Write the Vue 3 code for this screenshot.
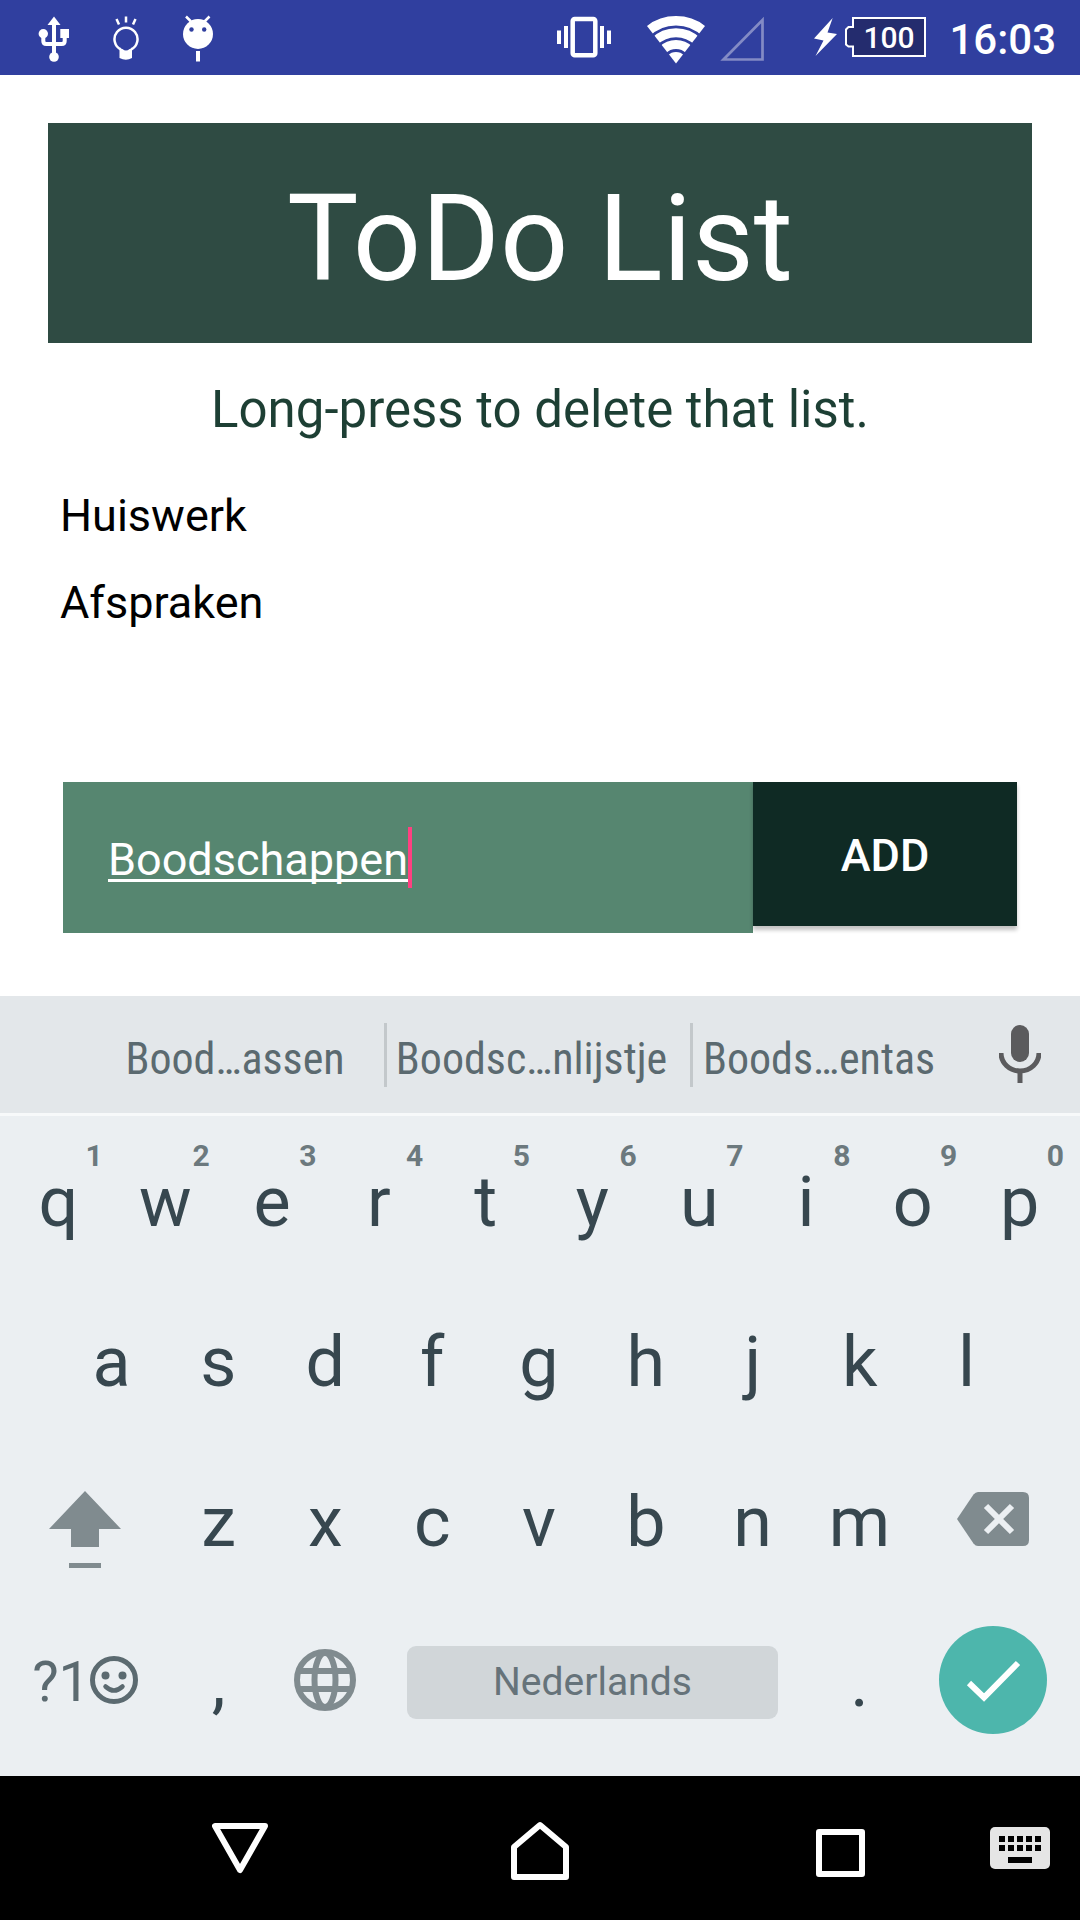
<script setup>
import { ref } from 'vue'

const lists = ref(['Huiswerk', 'Afspraken'])
const draft = ref('Boodschappen')

const suggestions = ['Bood…assen', 'Boodsc…nlijstje', 'Boods…entas']
const topRow = [...'qwertyuiop'].map((letter, i) => ({ letter, hint: (i + 1) % 10 }))
const homeRow = [...'asdfghjkl']
const bottomRow = [...'zxcvbnm']

function addList() {
  const name = draft.value.trim()
  if (!name) return
  lists.value.push(name)
  draft.value = ''
}

function removeList(index) {
  lists.value.splice(index, 1)
}

function type(char) {
  draft.value += char
}

function erase() {
  draft.value = draft.value.slice(0, -1)
}
</script>

<template>
  <div class="screen">
    <header class="status">
      <div class="notifications">
        <svg width="31" height="75" viewBox="38 0 31 75" fill="#fff" aria-label="USB">
          <path d="M54 16.500l6.500 8.500h-13z" />
          <circle cx="43.300" cy="33.700" r="4.700" />
          <path d="M60.300 29H69v9h-8.700z" />
          <circle cx="54" cy="57" r="4.800" />
          <path d="M54 24v30M43.300 36v5q0 3 3 3h15.400q3 0 3-3v-5" fill="none" stroke="#fff" stroke-width="4" />
        </svg>
        <svg width="26" height="75" viewBox="113 0 26 75" fill="none" stroke="#fff" aria-label="Tip">
          <path d="M121 49.500a11.500 11.500 0 1 1 10 0" stroke-width="2.500" />
          <path d="M119.500 49h3q3.500 3 7 0h2.500v9q-6 3.500-12.500 0z" fill="#fff" stroke="none" />
          <path d="M116.500 19l2.500 5.500M126 16.500v6M135.500 19l-2.500 5.500" stroke-width="2.500" />
        </svg>
        <svg width="30" height="75" viewBox="183 0 30 75" aria-label="Debugging">
          <path d="M186 16.500l5 5M209.500 16.500l-5 5" stroke="#fff" stroke-width="2.500" />
          <circle cx="198" cy="34" r="15" fill="#fff" />
          <path d="M196 51h4v10.500h-4z" fill="#fff" />
          <circle cx="191.500" cy="29.500" r="2.200" fill="#303f9f" />
          <circle cx="204.200" cy="29.500" r="2.200" fill="#303f9f" />
        </svg>
      </div>
      <div class="system">
        <svg class="vibrate" width="54" height="75" viewBox="557 0 54 75" fill="#fff" aria-label="Vibrate">
          <rect x="572.700" y="19" width="22.600" height="36.300" rx="2" fill="none" stroke="#fff" stroke-width="4.500" />
          <path d="M557 30.500h4v13.500h-4zM564 26h4v22h-4zM600 26h4v22h-4zM607 30.500h4v13.500h-4z" />
        </svg>
        <svg class="wifi" width="58" height="75" viewBox="647 0 58 75" fill="none" stroke="#fff" aria-label="Wi-Fi">
          <clipPath id="fan"><path d="M676 63.500L639 15.500V0h74v15.500z" /></clipPath>
          <g clip-path="url(#fan)">
            <circle cx="676" cy="63.500" r="42.700" stroke-width="9.500" />
            <circle cx="676" cy="63.500" r="30.700" stroke-width="9" />
            <circle cx="676" cy="63.500" r="19" stroke-width="9" />
            <circle cx="676" cy="63.500" r="11.500" fill="#fff" stroke="none" />
          </g>
        </svg>
        <svg class="signal" width="44" height="75" viewBox="720 0 44 75" fill="none" aria-label="No signal">
          <path d="M723.500 59.500h39v-39.500z" stroke="#838bc5" stroke-width="2.700" />
        </svg>
        <svg class="bolt" width="23" height="75" viewBox="814 0 23 75" fill="#fff" aria-label="Charging">
          <path d="M832.700 18L814 38.500l9.500 2-8 15.500L837 34l-9.500-1.500z" />
        </svg>
        <svg class="battery" width="82" height="75" viewBox="845 0 82 75" aria-label="Battery">
          <path d="M853 18h72v38h-72v-9.500h-4.500l-2.500-2V29.500l2.500-2.500h4.500z" fill="#242c6e" stroke="#fff" stroke-width="2" />
          <text x="889" y="48" text-anchor="middle" class="level">100</text>
        </svg>
        <time class="clock">16:03</time>
      </div>
    </header>

    <main class="app">
      <h1>ToDo List</h1>
      <p class="tip">Long-press to delete that list.</p>
      <ul class="lists">
        <li v-for="(name, i) in lists" :key="name" @contextmenu.prevent="removeList(i)">{{ name }}</li>
      </ul>
      <form class="entry" @submit.prevent="addList">
        <label class="field">
          <input v-model="draft" type="text" aria-label="New list" spellcheck="false" autocomplete="off" />
          <span class="caret"></span>
        </label>
        <button type="submit" class="add">ADD</button>
      </form>
    </main>

    <section class="keyboard" aria-label="Keyboard">
      <div class="suggestions">
        <button v-for="word in suggestions" :key="word" type="button">{{ word }}</button>
        <button type="button" class="mic" aria-label="Voice input">
          <svg width="42" height="58" viewBox="0 0 42 58">
            <rect x="12" y="0" width="18" height="37" rx="9" fill="#5b5b5d" />
            <path d="M2 28a19 18 0 0 0 38 0M21 46v12" fill="none" stroke="#5b5b5d" stroke-width="5" />
          </svg>
        </button>
      </div>

      <div class="keys">
        <div class="row">
          <button v-for="key in topRow" :key="key.letter" type="button" class="key" @click="type(key.letter)">
            {{ key.letter }}<small>{{ key.hint }}</small>
          </button>
        </div>
        <div class="row home">
          <button v-for="letter in homeRow" :key="letter" type="button" class="key" @click="type(letter)">{{ letter }}</button>
        </div>
        <div class="row">
          <button type="button" class="key wide" aria-label="Shift">
            <svg width="72" height="92" viewBox="0 0 72 92" fill="#808b8f">
              <path d="M36 15l36 38H50v18H22V53H0zM20 87h32v5H20z" />
            </svg>
          </button>
          <button v-for="letter in bottomRow" :key="letter" type="button" class="key" @click="type(letter)">{{ letter }}</button>
          <button type="button" class="key wide" aria-label="Backspace" @click="erase">
            <svg width="72" height="60" viewBox="0 0 72 60">
              <path d="M0 27L16.500 2.500Q18.500 0 21 0H66q6 0 6 6V48q0 6-6 6H21q-2.500 0-4.500-2.500z" fill="#808b8f" />
              <path d="M29 14l26 26M55 14L29 40" stroke="#ebeff2" stroke-width="6" />
            </svg>
          </button>
        </div>
        <div class="row">
          <button type="button" class="key wide symbols" aria-label="Symbols and emoji">
            <span>?1</span>
            <svg width="48" height="52" viewBox="0 0 48 52" fill="#5b6a70">
              <circle cx="24" cy="24" r="21.500" fill="none" stroke="#5b6a70" stroke-width="5" />
              <circle cx="15.500" cy="19.500" r="4" />
              <circle cx="32.500" cy="19.500" r="4" />
              <path d="M15.500 30.500q8.500 8 17 0" fill="none" stroke="#5b6a70" stroke-width="4.500" stroke-linecap="round" />
            </svg>
          </button>
          <button type="button" class="key" @click="type(',')">,</button>
          <button type="button" class="key" aria-label="Language">
            <svg width="62" height="66" viewBox="0 0 62 66" fill="none" stroke="#808b8f" stroke-width="6">
              <circle cx="31" cy="31" r="28" />
              <ellipse cx="31" cy="31" rx="10.500" ry="27" />
              <path d="M6 22h50M6 40h50" />
            </svg>
          </button>
          <div class="space-slot">
            <button type="button" class="space" @click="type(' ')">Nederlands</button>
          </div>
          <button type="button" class="key" @click="type('.')">.</button>
          <button type="button" class="key wide" aria-label="Done" @click="addList">
            <svg width="108" height="112" viewBox="0 0 108 112">
              <circle cx="54" cy="54" r="54" fill="#4db6ac" />
              <path d="M30 57l15 14.500L79 37" fill="none" stroke="#fff" stroke-width="6" />
            </svg>
          </button>
        </div>
      </div>
    </section>

    <nav class="navbar">
      <button type="button" class="back" aria-label="Back">
        <svg width="56" height="60" viewBox="0 0 56 60" fill="none" stroke="#fff" stroke-width="6" stroke-linejoin="round">
          <path d="M3 8h50L28 52z" />
        </svg>
      </button>
      <button type="button" aria-label="Home">
        <svg width="58" height="66" viewBox="0 0 58 66" fill="none" stroke="#fff" stroke-width="6">
          <path d="M3 62V32L29 10l26 22v30z" stroke-linejoin="round" />
        </svg>
      </button>
      <button type="button" aria-label="Recent apps">
        <svg width="49" height="58" viewBox="0 0 49 58" fill="none" stroke="#fff" stroke-width="6" stroke-linejoin="round">
          <path d="M3 13h43v42H3z" />
        </svg>
      </button>
      <button type="button" class="switcher" aria-label="Change keyboard">
        <svg width="60" height="42" viewBox="0 0 60 42">
          <rect width="60" height="42" rx="5" fill="#e5e5e5" />
          <path d="M9 12h42M9 21h42" stroke="#000" stroke-width="6" stroke-dasharray="6 3" />
          <path d="M18 30h24v6H18z" />
        </svg>
      </button>
    </nav>
  </div>
</template>

<style>
body {
  margin: 0;
}
</style>

<style scoped>
.screen {
  display: flex;
  flex-direction: column;
  min-height: 100vh;
  background: #fff;
  font-family: Roboto, "Liberation Sans", sans-serif;
  color: #000;
}

svg {
  display: block;
  flex: none;
}

button {
  margin: 0;
  padding: 0;
  border: 0;
  background: none;
  color: inherit;
  font: inherit;
}

.status {
  display: flex;
  justify-content: space-between;
  height: 75px;
  padding: 0 24px 0 38px;
  background: #303f9f;
  color: #fff;
}

.notifications {
  display: flex;
  gap: 44px;
}

.system {
  display: flex;
}

.vibrate {
  margin-right: 36px;
}

.wifi {
  margin-right: 15px;
}

.signal {
  margin-right: 50px;
}

.bolt {
  margin-right: 8px;
}

.battery {
  margin-right: 22px;
}

.level {
  fill: #fff;
  font-size: 30px;
  font-weight: 500;
}

.clock {
  padding-top: 2px;
  font-size: 42px;
  font-weight: 500;
  line-height: 75px;
}

.app {
  display: flex;
  flex: 1;
  flex-direction: column;
  padding: 48px 48px 63px;
}

h1 {
  margin: 0;
  padding-top: 12px;
  background: #2f4b43;
  color: #fff;
  font-size: 120px;
  font-weight: 400;
  line-height: 208px;
  text-align: center;
}

.tip {
  margin: 37px 0 0;
  color: #1d3f34;
  font-size: 51px;
  line-height: 60px;
  text-align: center;
}

.lists {
  flex: 1;
  margin: 32px 0 0;
  padding: 0 12px;
  font-size: 45px;
  line-height: 87px;
  list-style: none;
}

.entry {
  display: flex;
  align-items: flex-start;
  margin: 0 15px;
}

.field {
  display: flex;
  flex: 1;
  align-items: center;
  box-sizing: border-box;
  height: 151px;
  padding: 0 45px;
  background: #568670;
}

.field input {
  field-sizing: content;
  min-width: 0;
  padding: 4px 0 0;
  border: 0;
  outline: 0;
  background: none;
  color: #fff;
  caret-color: transparent;
  font: inherit;
  font-size: 45px;
  line-height: 60px;
  text-decoration: underline;
  text-decoration-thickness: 3px;
  text-decoration-skip-ink: none;
  text-underline-offset: 4px;
}

.caret {
  flex: none;
  width: 4px;
  height: 61px;
  background: #ff4081;
}

.add {
  width: 264px;
  height: 144px;
  padding-top: 2px;
  background: #0f2a24;
  box-shadow: 0 4px 4px rgba(0, 0, 0, 0.24);
  color: #fff;
  font-size: 45px;
  font-weight: 500;
}

.keyboard {
  background: #ebeff2;
}

.suggestions {
  display: grid;
  grid-template-columns: 287fr 306fr 266fr 121fr;
  height: 117px;
  padding-left: 100px;
  border-bottom: 3px solid #f7f9fa;
  background: #e3e7ea;
}

.suggestions button {
  align-self: center;
  box-sizing: border-box;
  height: 64px;
  padding: 9px 14px 0 0;
  border-right: 3px solid #c3c8cb;
  color: #5b6a70;
  font-family: "Roboto Condensed", Roboto, "Liberation Sans", sans-serif;
  font-size: 44px;
  line-height: 54px;
  white-space: nowrap;
}

.suggestions button:nth-child(n + 3) {
  border-right: 0;
}

.suggestions .mic {
  display: flex;
  justify-content: center;
  padding: 2px 0 0;
}

.keys {
  padding: 6px 7px 14px 5px;
}

.row {
  display: flex;
  height: 160px;
}

.home {
  padding: 0 53px;
}

.key {
  position: relative;
  display: flex;
  flex: 2 1 0;
  align-items: center;
  justify-content: center;
  color: #37474f;
  font-size: 70px;
}

.key small {
  position: absolute;
  top: 16px;
  right: 9px;
  color: #6c797e;
  font-size: 30px;
  font-weight: 700;
  line-height: 36px;
}

.wide {
  flex-grow: 3;
}

.symbols {
  color: #5b6a70;
  font-size: 56px;
}

.space-slot {
  display: flex;
  flex: 8 1 0;
  align-items: center;
  justify-content: center;
}

.space {
  width: calc(100% - 56px);
  height: 73px;
  border-radius: 9px;
  background: #d1d6d9;
  color: #66737a;
  font-size: 39px;
}

.navbar {
  display: grid;
  grid-template-columns: 3fr 10fr 10fr 10fr 3fr;
  height: 144px;
  background: #000;
}

.navbar button {
  display: flex;
  align-items: center;
  justify-content: center;
}

.navbar .back {
  grid-column: 2;
}

.navbar .switcher {
  justify-content: flex-start;
}
</style>
